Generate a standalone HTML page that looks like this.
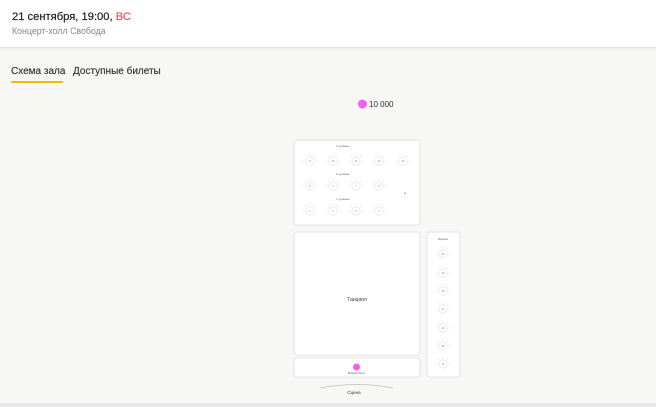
<!DOCTYPE html>
<html><head><meta charset="utf-8"><style>
body{margin:0;width:656px;height:407px;overflow:hidden;background:#f7f7f5;font-family:"Liberation Sans","Noto Sans CJK SC",sans-serif;position:relative}
.hdr{position:absolute;left:0;top:0;width:656px;height:47px;background:#fff;border-bottom:1px solid #e4e4e4;box-shadow:0 1px 2px rgba(0,0,0,.05)}
.t1{position:absolute;left:12px;top:11px;font-size:11.2px;color:#222;-webkit-text-stroke:.2px #222}
.t1 span{color:#f0505a;-webkit-text-stroke:.2px #f0505a}
.t2{position:absolute;left:12px;top:26px;font-size:8.8px;color:#999;-webkit-text-stroke:.15px #999}
.tab{position:absolute;top:66px;font-size:10px;color:#333;-webkit-text-stroke:.15px #333}
.ul{position:absolute;left:11px;top:81px;width:52px;height:2px;background:#f5b800;border-radius:1px}
svg{position:absolute;left:0;top:0}
</style></head><body>
<div class="hdr"><div class="t1">21 сентября, 19:00, <span>ВС</span></div><div class="t2">Концерт-холл Свобода</div></div>
<div class="tab" style="left:11px">Схема зала</div>
<div class="tab" style="left:73px">Доступные билеты</div>
<div class="ul"></div>
<svg width="656" height="407" font-family="Liberation Sans, sans-serif">
<defs>
<g id="tb"><circle r="4.2" fill="#fff" stroke="#d4d4d4" stroke-width=".5"/><g fill="#ddd"><circle cx="-7" cy="0" r=".6"/><circle cx="7" cy="0" r=".6"/><circle cx="-4.5" cy="-5" r=".6"/><circle cx="4.5" cy="-5" r=".6"/><circle cx="0" cy="-7" r=".6"/></g></g>
</defs>
<circle cx="362.5" cy="104" r="4.5" fill="#f55ef0"/>
<text x="369" y="107" font-size="8" fill="#333">10 000</text>
<rect x="294" y="140" width="126" height="85" rx="3" fill="#fff" stroke="#ddd" stroke-width=".8"/>
<g font-size="3" fill="#666" text-anchor="middle">
<text x="343" y="147">3 уровень</text><text x="343" y="175">2 уровень</text><text x="343" y="200">1 уровень</text>
<text x="405" y="194">ш</text>
</g>
<g><use href="#tb" x="310" y="161"/><use href="#tb" x="333" y="161"/><use href="#tb" x="356" y="161"/><use href="#tb" x="379" y="161"/><use href="#tb" x="403" y="161"/>
<use href="#tb" x="310" y="186"/><use href="#tb" x="333" y="186"/><use href="#tb" x="356" y="186"/><use href="#tb" x="379" y="186"/>
<use href="#tb" x="310" y="211"/><use href="#tb" x="333" y="211"/><use href="#tb" x="356" y="211"/><use href="#tb" x="379" y="211"/></g>
<g font-size="2.5" fill="#777" text-anchor="middle">
<text x="310" y="162">9</text><text x="333" y="162">10</text><text x="356" y="162">11</text><text x="379" y="162">12</text><text x="403" y="162">13</text>
<text x="310" y="187">5</text><text x="333" y="187">6</text><text x="356" y="187">7</text><text x="379" y="187">8</text>
<text x="310" y="212">1</text><text x="333" y="212">2</text><text x="356" y="212">3</text><text x="379" y="212">4</text>
</g>
<rect x="294" y="232" width="126" height="123" rx="3" fill="#fff" stroke="#ddd" stroke-width=".8"/>
<text x="357" y="301" font-size="5" fill="#333" text-anchor="middle">Танцпол</text>
<rect x="294" y="358" width="126" height="19" rx="3" fill="#fff" stroke="#ddd" stroke-width=".8"/>
<circle cx="356.5" cy="367" r="3.5" fill="#f55ef0"/>
<text x="356.5" y="374" font-size="2.5" fill="#555" text-anchor="middle">Входной билет</text>
<rect x="427" y="232" width="33" height="145" rx="3" fill="#fff" stroke="#ddd" stroke-width=".8"/>
<text x="443" y="240" font-size="3" fill="#666" text-anchor="middle">Балкон</text>
<g><use href="#tb" x="443" y="254"/><use href="#tb" x="443" y="273"/><use href="#tb" x="443" y="291"/><use href="#tb" x="443" y="309"/><use href="#tb" x="443" y="328"/><use href="#tb" x="443" y="346"/><use href="#tb" x="443" y="364"/></g>
<g font-size="2.5" fill="#777" text-anchor="middle">
<text x="443" y="255">20</text><text x="443" y="274">19</text><text x="443" y="292">18</text><text x="443" y="310">17</text><text x="443" y="329">16</text><text x="443" y="347">15</text><text x="443" y="365">14</text>
</g>
<path d="M320 388 Q356 381 393 388" fill="none" stroke="#bbb" stroke-width=".8"/>
<text x="354" y="394" font-size="4.5" fill="#333" text-anchor="middle">Сцена</text>
<rect x="0" y="403" width="656" height="4" fill="#e8e8e8"/>
</svg>
</body></html>
